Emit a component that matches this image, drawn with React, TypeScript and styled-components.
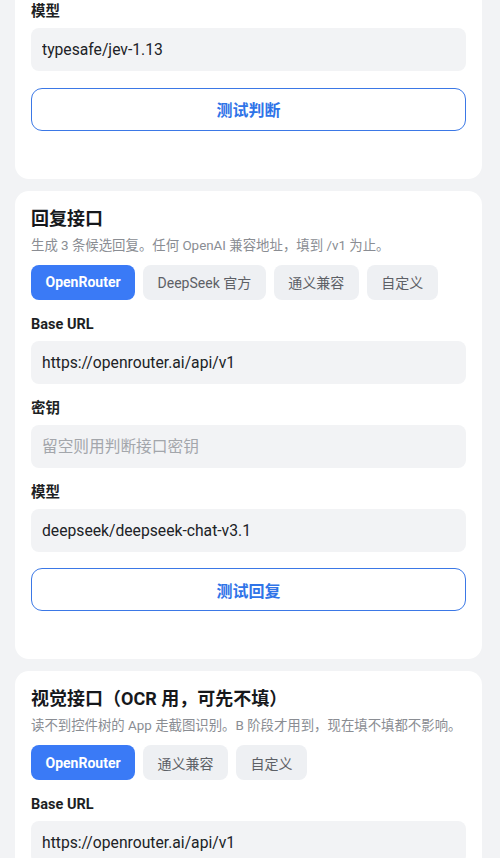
import React from "react";
import styled, { createGlobalStyle } from "styled-components";

const GlobalStyle = createGlobalStyle`
  html, body {
    margin: 0;
    padding: 0;
    background: #f2f3f5;
    font-family: Roboto, "Noto Sans CJK SC", sans-serif;
    color: #1d1f24;
  }
  * { box-sizing: border-box; }
`;

const Page = styled.div`
  display: flex;
  flex-direction: column;
  gap: 12px;
  padding: 0 18px 0 15px;
`;

const Card = styled.section`
  background: #ffffff;
  border-radius: 14px;
  padding: 16px 16px 48px;
  display: flex;
  flex-direction: column;
`;

const TopCard = styled(Card)`
  border-radius: 0 0 14px 14px;
  padding-top: 2px;
`;

const Title = styled.h2`
  margin: 0;
  font-size: 18px;
  line-height: 24px;
  font-weight: 700;
  color: #16181c;
`;

const Desc = styled.p`
  margin: 6px 0 0;
  font-size: 13.4px;
  line-height: 18px;
  color: #8a8d93;
`;

const Chips = styled.div`
  display: flex;
  gap: 8px;
  margin-top: 10px;
`;

const Chip = styled.button<{ $active?: boolean }>`
  height: 35px;
  padding: 0 14.5px;
  border: none;
  border-radius: 8px;
  font-family: inherit;
  font-size: 14px;
  font-weight: ${(p) => (p.$active ? 700 : 400)};
  background: ${(p) => (p.$active ? "#3a7af6" : "#eef0f3")};
  color: ${(p) => (p.$active ? "#ffffff" : "#5d6066")};
`;

const Label = styled.label<{ $first?: boolean }>`
  display: block;
  margin-top: ${(p) => (p.$first ? 0 : 15)}px;
  font-size: 14.5px;
  line-height: 20px;
  font-weight: 700;
  color: #1d1f24;
`;

const Input = styled.input`
  display: block;
  width: 100%;
  height: 43px;
  margin-top: 6px;
  padding: 0 11px;
  border: none;
  border-radius: 8px;
  background: #f2f3f5;
  font-family: inherit;
  font-size: 15.7px;
  color: #202226;
  outline: none;
  &::placeholder {
    color: #a3a6ab;
  }
`;

const TestButton = styled.button`
  margin-top: 16.5px;
  height: 43px;
  width: 100%;
  border: 1px solid #3b78e6;
  border-radius: 11px;
  background: #ffffff;
  color: #2f74e8;
  font-family: inherit;
  font-size: 16px;
  font-weight: 700;
`;

const Field: React.FC<{
  label: string;
  value?: string;
  placeholder?: string;
  first?: boolean;
}> = ({ label, value, placeholder, first }) => (
  <>
    <Label $first={first}>{label}</Label>
    <Input defaultValue={value} placeholder={placeholder} />
  </>
);

export default function App() {
  return (
    <>
      <GlobalStyle />
      <Page>
        <TopCard>
          <Field first label="模型" value="typesafe/jev-1.13" />
          <TestButton>测试判断</TestButton>
        </TopCard>

        <Card>
          <Title>回复接口</Title>
          <Desc>生成 3 条候选回复。任何 OpenAI 兼容地址，填到 /v1 为止。</Desc>
          <Chips>
            <Chip $active>OpenRouter</Chip>
            <Chip>DeepSeek 官方</Chip>
            <Chip>通义兼容</Chip>
            <Chip>自定义</Chip>
          </Chips>
          <Field label="Base URL" value="https://openrouter.ai/api/v1" />
          <Field label="密钥" placeholder="留空则用判断接口密钥" />
          <Field label="模型" value="deepseek/deepseek-chat-v3.1" />
          <TestButton>测试回复</TestButton>
        </Card>

        <Card>
          <Title>视觉接口（OCR 用，可先不填）</Title>
          <Desc>读不到控件树的 App 走截图识别。B 阶段才用到，现在填不填都不影响。</Desc>
          <Chips>
            <Chip $active>OpenRouter</Chip>
            <Chip>通义兼容</Chip>
            <Chip>自定义</Chip>
          </Chips>
          <Field label="Base URL" value="https://openrouter.ai/api/v1" />
        </Card>
      </Page>
    </>
  );
}
